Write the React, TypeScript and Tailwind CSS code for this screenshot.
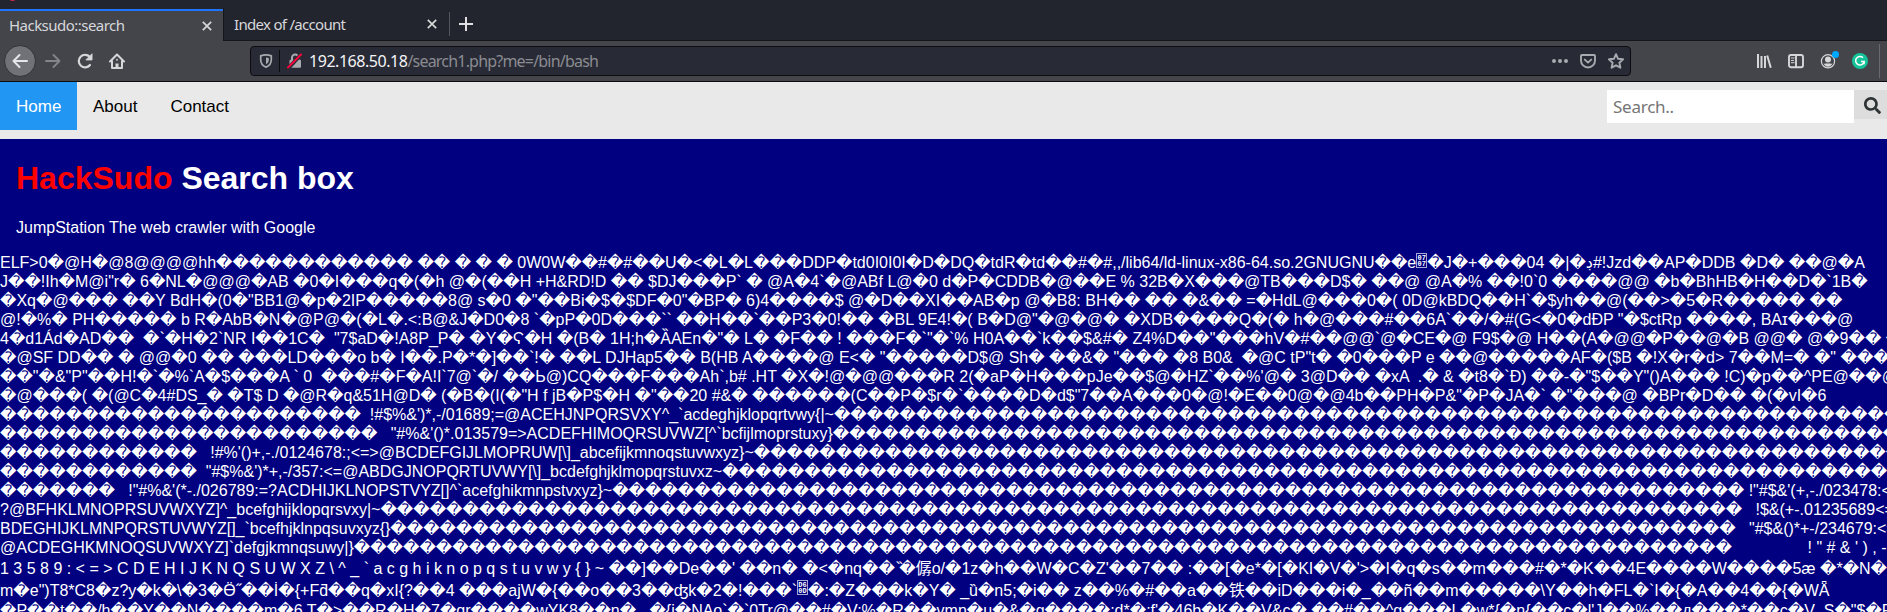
import React from "react";
import { FaSearch } from "react-icons/fa";

const bad = (n: number) => "\uFFFD".repeat(n);

function HexBox({ top, bottom }: { top: string; bottom: string }) {
  return (
    <span className="inline-flex h-[15px] w-[11px] flex-col items-center justify-center border border-[#a8a8d8] align-top font-['Liberation_Mono',monospace] text-[7px] leading-[6px] font-bold">
      <span>{top}</span>
      <span>{bottom}</span>
    </span>
  );
}

type Row = { h?: string; text: React.ReactNode };

const rows: Row[] = [
  {
    text: (
      <>
        {"ELF>0�@H�@8@@@@hh" + bad(12) + " �� � � � 0W0W��#�#��U�<�L�L���DDP�td0I0I0I�D�DQ�tdR�td��#�#,,/lib64/ld-linux-x86-64.so.2GNUGNU��e"}
        <HexBox top="07" bottom="07" />
        {"�J�+���04 �|�\u068A#!Jzd��AP�DDB �D� ��@�A"}
      </>
    ),
  },
  { text: "J��!Ih�M@i\"r� 6�NL�@@@�AB �0�I���q�(�h @�(��H +H&RD!D �� $DJ���P` � @A�4`�@ABf L@�0 d�P�CDDB�@��E % 32B�X���@TB���D$� ��@ @A�% ��!0`0 ����@@ �b�BhHB�H��D�`1B�" },
  { text: "�Xq�@��� ��Y BdH�(0�\"BB1@�p�2IP�����8@ s�0 �\"��Bi�$�$DF�0\"�BP� 6)4����$ @�D��XI��AB�p @�B8: BH�� �� �&�� =�HdL@���0�( 0D@kBDQ��H`�$yh��@(��>�5�R����� ��" },
  { text: "@!�%� PH����� b R�AbB�N�@P@�(�L�.<:B@&J�D0�8 `�pP�0D���`` ��H��`��P3�0!�� �BL 9E4!�( B�D@\"�@�@� �XDB����Q�(� h�@���#��6A`��/�#(G<�0�dÐP \"�$ctRp ����, BAɪ���@" },
  { text: "4�d1Ád�AD��  �`�H�2`NR I��1C�  \"7$aD�!A8P_P� �Y�Ϛ�H �(B� 1H;h�ȀAEn�\"� L� �F�� ! ���F�`\"�`% H0A��`k��$&#� Z4%D��\"���hV�#��@@`@�CE�@ F9$�@ H��(A�@@�P��@�B @@� @�9�� �" },
  { text: "�@SF DD�� � @@�0 �� ���LD���o b� I��.P�*�]��`!� ��L DJHap5�� B(HB A����@ E<� \"�����D$@ Sh� ��&� \"��� �8 B0&  �@C tP\"t� �0���P e ��@�����AF�($B �!X�r�d> 7��M=� �\" ����" },
  { text: "��\"�&\"P\"��H!�`�%`A�$���A ` 0  ���#�F�A!I`7@`�/ ��Ь@)CQ���F���Ah`,b# .HT �X�!@�@@���R 2(�aP�H���pJe��$@�HZ`��%'@� 3@D�� �xA  .� & �t8�`Ð) ��-�\"$��Y\"()A��� !C)�p��^PE@��@" },
  { text: "�@���( �(@C�4#DS_� �T$ D �@R�q&51H@D� (�B�(I(�\"H f jB�P$�H �\"��20 #&� ������(C��P�$r�`����D�d$\"7��A���0�@!�E��0@�@4b��PH�P&\"�P�JA�` �\"���@ �BPr�D�� �(�vI�6" },
  { text: bad(22) + "  !#$%&')*,-/01689;=@ACEHJNPQRSVXY^_`acdeghjklopqrtvwy{|~" + bad(70) },
  { text: bad(23) + "   \"#%&'()*.013579=>ACDEFHIMOQRSUVWZ[^`bcfijlmoprstuxy}" + bad(70) },
  { text: bad(12) + "   !#%'()+,-./0124678:;<=>@BCDEFGIJLMOPRUW[\\]_abcefijkmnoqstuvwxyz}~" + bad(74) },
  { text: bad(12) + "  \"#$%&')*+,-/357:<=@ABDGJNOPQRTUVWY[\\]_bcdefghjklmopqrstuvxz~" + bad(76) },
  { text: bad(7) + "   !\"#%&'(*-./026789:=?ACDHIJKLNOPSTVYZ[]^`acefghikmnpstvxyz}~" + bad(69) + " !\"#$&'(+,-./023478:<=>" },
  { text: "?@BFHKLMNOPRSUVWXYZ]^_bcefghijklopqrsvxy|~" + bad(83) + "   !$&(+-.01235689<=>" },
  { text: "BDEGHIJKLMNPQRSTUVWYZ[]_`bcefhjklnpqsuvxyz{}" + bad(82) + "   \"#$&()*+-/234679:<=>" },
  { text: "@ACDEGHKMNOQSUVWXYZ]`defgjkmnqsuwy|}" + bad(84) + " ".repeat(17) + "! \" # & ' ) , - . /" },
  {
    h: "h-[23px] leading-[23px]",
    text: "1 3 5 8 9 : < = > C D E H I J K N Q S U W X Z \\ ^ _ ` a c g h i k n o p q s t u v w y { } ~ ��]��De��' ��n� �<�nq�� \u030F�僝o/�1z�h��W�C�Z'��7�� :��[�e*�[�KI�V�'>�I�q�s��m���#�*�K��4E����W����5æ �*�N�",
  },
  {
    h: "h-[21px] leading-[21px]",
    text: (
      <>
        {"m�e\")T8*C8�z?y�k�\\�3�Ӫ˝��İ�{+Fƌ��q�xI{?��4 ���ajW�{��o��3��ʤk�2�!���`"}
        <HexBox top="D6" bottom="0D" />
        {"�:�Z���k�Y� _ȕ�n5;�i�� z��%�#��a��铁��iD���i�_��ñ��m�����\\Y��h�FL�`I�{�A��4��{�WǞ"}
      </>
    ),
  },
  { text: "�P��t��/h��Y��N����m�6 T�>��R�H�7�qr����wYK8��n� .,�{i�NAo`�`0Tr@��#�V:%�R��vmn�u�&�g����;d*�:f'�46b�K��V&c� ��#��^g���L�w*{�n{��c�l'J��%��д���*��c�V_S�\"$�F" },
];

function CloseIcon() {
  return (
    <svg className="size-[10px]" viewBox="0 0 10 10" fill="none" stroke="#d7d7d9" strokeWidth="1.7">
      <path d="M.8.8 9.2 9.2M9.2.8.8 9.2" />
    </svg>
  );
}

function TabStrip() {
  return (
    <div className="flex h-[41px] items-end bg-[#23252e] text-[15px] text-[#d7d7db]">
      <div className="flex h-[32px] w-[223px] items-center justify-between border-t-2 border-[#1f75fe] bg-[#43454b] pr-[11px] pl-[9px]">
        <span className="-mt-[2px] tracking-[-0.53px]">Hacksudo::search</span>
        <CloseIcon />
      </div>
      <div className="flex h-[33px] flex-1 items-center border-b border-l border-[#15161b]">
        <div className="flex h-6 w-[226px] items-center justify-between border-r border-[#54565e] pr-[12px] pl-[10px]">
          <span className="tracking-[-0.7px]">Index of /account</span>
          <CloseIcon />
        </div>
        <svg className="ml-[9px] size-[14px]" viewBox="0 0 14 14" stroke="#e0e0e2" strokeWidth="2">
          <path d="M7 0v14M0 7h14" />
        </svg>
      </div>
    </div>
  );
}

function Toolbar() {
  return (
    <div className="flex h-[41px] items-center border-b border-[#0c0c0d] bg-[#43454b] pl-1">
      <div className="flex size-8 items-center justify-center rounded-full border border-[#303238] bg-[#717277]">
        <svg className="size-4" viewBox="0 0 16 16" fill="none" stroke="#e6e6e8" strokeWidth="2" strokeLinecap="round" strokeLinejoin="round">
          <path d="M15 8H1.5M7.5 2l-6 6 6 6" />
        </svg>
      </div>
      <svg className="ml-[9px] size-4" viewBox="0 0 16 16" fill="none" stroke="#84858a" strokeWidth="1.9" strokeLinecap="round" strokeLinejoin="round">
        <path d="M1 8h13.5M8.5 2l6 6-6 6" />
      </svg>
      <svg className="ml-4 size-4" viewBox="0 0 16 16" fill="none" stroke="#d7d7d9" strokeWidth="2.2" strokeLinecap="round">
        <path d="M13 12A6.300 6.300 0 1 1 12.700 3.800" />
        <path d="M15 1.200v5.700H9.300z" fill="#d7d7d9" stroke="#d7d7d9" strokeWidth="1" strokeLinejoin="round" />
      </svg>
      <svg className="ml-4 size-4" viewBox="0 0 16 16" fill="none" stroke="#d7d7d9" strokeWidth="2" strokeLinejoin="round" strokeLinecap="round">
        <path d="M1 8.500 8 1.500l7 7M3 8v7h10V8" />
        <path d="M8 14v-3.500" strokeWidth="3" strokeLinecap="butt" />
        <path d="M8 6.500v.6" strokeWidth="1.6" />
      </svg>
      <div className="ml-[125px] flex h-[30px] w-[1381px] items-center rounded-[4px] border border-[#0c0c10] bg-[#282a35] pr-[6px] pl-2">
        <svg className="size-[14px]" viewBox="0 0 14 14" fill="none" stroke="#a9aab0" strokeWidth="1.7">
          <path d="M7 .9c2 0 4 .5 5.300 1v3.600c0 4-2.300 6.500-5.300 7.600-3-1.100-5.300-3.600-5.300-7.600V1.900C3 1.400 5 .9 7 .9z" />
          <path d="M7 3.500c1 0 2 .2 2.800.5v2C9.800 8 8.700 9.400 7 10.300z" fill="#a9aab0" stroke="none" />
        </svg>
        <div className="ml-[6px] h-[22px] w-px bg-[#0c0c10]" />
        <svg className="ml-[7px] size-4" viewBox="0 0 16 16">
          <path d="M5 7V4.800a3.200 3.200 0 0 1 6.400 0V7" fill="none" stroke="#a9aab0" strokeWidth="2" />
          <rect x="2.500" y="6.800" width="11.500" height="8" rx="1" fill="#a9aab0" />
          <path d="M1 15.500 14 1.500" stroke="#282a35" strokeWidth="4" />
          <path d="M1 14.500 14 1.500" stroke="#f5073c" strokeWidth="2" strokeLinecap="round" />
        </svg>
        <span className="ml-[6px] flex-1 text-[16px] tracking-[-0.8px] text-[#8b8c92]">
          <span className="tracking-[-0.46px] text-[#f4f4f6]">192.168.50.18</span>/search1.php?me=/bin/bash
        </span>
        <svg className="size-4" viewBox="0 0 16 16" fill="#a9aab0">
          <circle cx="2" cy="8" r="2" />
          <circle cx="8" cy="8" r="2" />
          <circle cx="14" cy="8" r="2" />
        </svg>
        <svg className="ml-3 size-4" viewBox="0 0 16 16" fill="none" stroke="#a9aab0" strokeWidth="1.900" strokeLinecap="round" strokeLinejoin="round">
          <path d="M1.900 2h12.200a.9.9 0 0 1 .9.9V7.500a7 7 0 0 1-14 0V2.900A.9.9 0 0 1 1.900 2z" />
          <path d="m4.800 6.600 3.200 3 3.200-3" />
        </svg>
        <svg className="ml-3 size-4" viewBox="0 0 16 16" fill="none" stroke="#a9aab0" strokeWidth="1.900" strokeLinejoin="round">
          <path d="m8 1.200 2.100 4.600 5 .5-3.700 3.400 1 5L8 12.300l-4.400 2.400 1-5L.9 6.300l5-.5z" />
        </svg>
      </div>
      <svg className="ml-[125px] size-4" viewBox="0 0 16 16" stroke="#d7d7d9" strokeWidth="2" strokeLinecap="butt">
        <path d="M2 1v14M5.500 3v12M9 3v12M11.200 2.500l3.600 12.300" fill="none" />
      </svg>
      <svg className="ml-4 size-4" viewBox="0 0 16 16" fill="none" stroke="#d7d7d9" strokeWidth="1.900">
        <rect x="1" y="2" width="14" height="12.200" rx="2" />
        <path d="M8 2v12" />
        <path d="M3 5h3.500M3 7.400h3M3 9.700h3.500" strokeWidth="1" />
      </svg>
      <div className="relative ml-4 size-4">
        <svg className="size-4" viewBox="0 0 16 16">
          <circle cx="8" cy="8.300" r="6.600" fill="none" stroke="#d7d7d9" strokeWidth="1.200" />
          <circle cx="8" cy="6.500" r="3" fill="#d7d7d9" />
          <path d="M3.400 10.500c1 .7 2 .3 2.600-.3.6.5 3.400.5 4 0 .6.6 1.600 1 2.600.3-1 2-2.700 3.200-4.600 3.200s-3.600-1.200-4.600-3.200z" fill="#d7d7d9" />
        </svg>
        <span className="absolute -top-[2px] left-[12px] size-[7px] rounded-full bg-[#00a8ff]" />
      </div>
      <svg className="ml-4 size-4" viewBox="0 0 16 16">
        <circle cx="8" cy="8" r="8" fill="#15c39a" />
        <path d="M11 4.700A4.300 4.300 0 1 0 12.200 8.400H9" fill="none" stroke="#fff" strokeWidth="1.500" />
        <path d="M12.100 8.200v3" stroke="#fff" strokeWidth="1.300" />
      </svg>
      <div className="ml-[11px] h-[34px] w-px bg-[#696a70]" />
    </div>
  );
}

function NavBar() {
  return (
    <nav className="flex h-[57px] items-start bg-[#e9e9e9] text-[17px] leading-[20px] text-black">
      <a className="w-[77px] bg-[#2196f3] px-4 pt-[15px] pb-[13px] text-white">Home</a>
      <a className="px-4 pt-[15px] pb-[13px]">About</a>
      <a className="pr-4 pl-[17px] pt-[15px] pb-[13px]">Contact</a>
      <div className="ml-auto flex items-start pt-2">
        <input
          className="h-[33px] w-[247px] bg-white px-[6px] font-['Noto_Sans',sans-serif] text-[17px] tracking-[-0.25px] placeholder:text-[#757575]"
          placeholder="Search.."
        />
        <button className="flex h-[29px] w-[33px] items-center justify-center bg-[#dddddd] pt-px pl-[3px] text-[#2e3436]">
          <FaSearch size={17} />
        </button>
      </div>
    </nav>
  );
}

export default function App() {
  return (
    <div className="relative h-[612px] w-full overflow-hidden bg-[#000080] font-['Liberation_Sans','DejaVu_Sans','Noto_Sans_CJK_SC',sans-serif] text-white">
      <div className="font-['Noto_Sans',sans-serif]">
        <TabStrip />
        <Toolbar />
      </div>
      <span className="absolute -top-[6px] left-[9px] size-[7px] rounded-full bg-[#d3264a]" />
      <NavBar />
      <header className="px-4 pt-[21px]">
        <h1 className="text-[32px] leading-[37px] font-bold">
          <span className="text-[#ff0000]">HackSudo</span> Search box
        </h1>
        <p className="mt-[21px] text-[16px] leading-[19px]">JumpStation The web crawler with Google</p>
      </header>
      <main className="mt-4 text-[16px]">
        {rows.map((row, i) => (
          <div key={i} className={"whitespace-pre " + (row.h ?? "h-[19px] leading-[19px]")}>
            {row.text}
          </div>
        ))}
      </main>
    </div>
  );
}
